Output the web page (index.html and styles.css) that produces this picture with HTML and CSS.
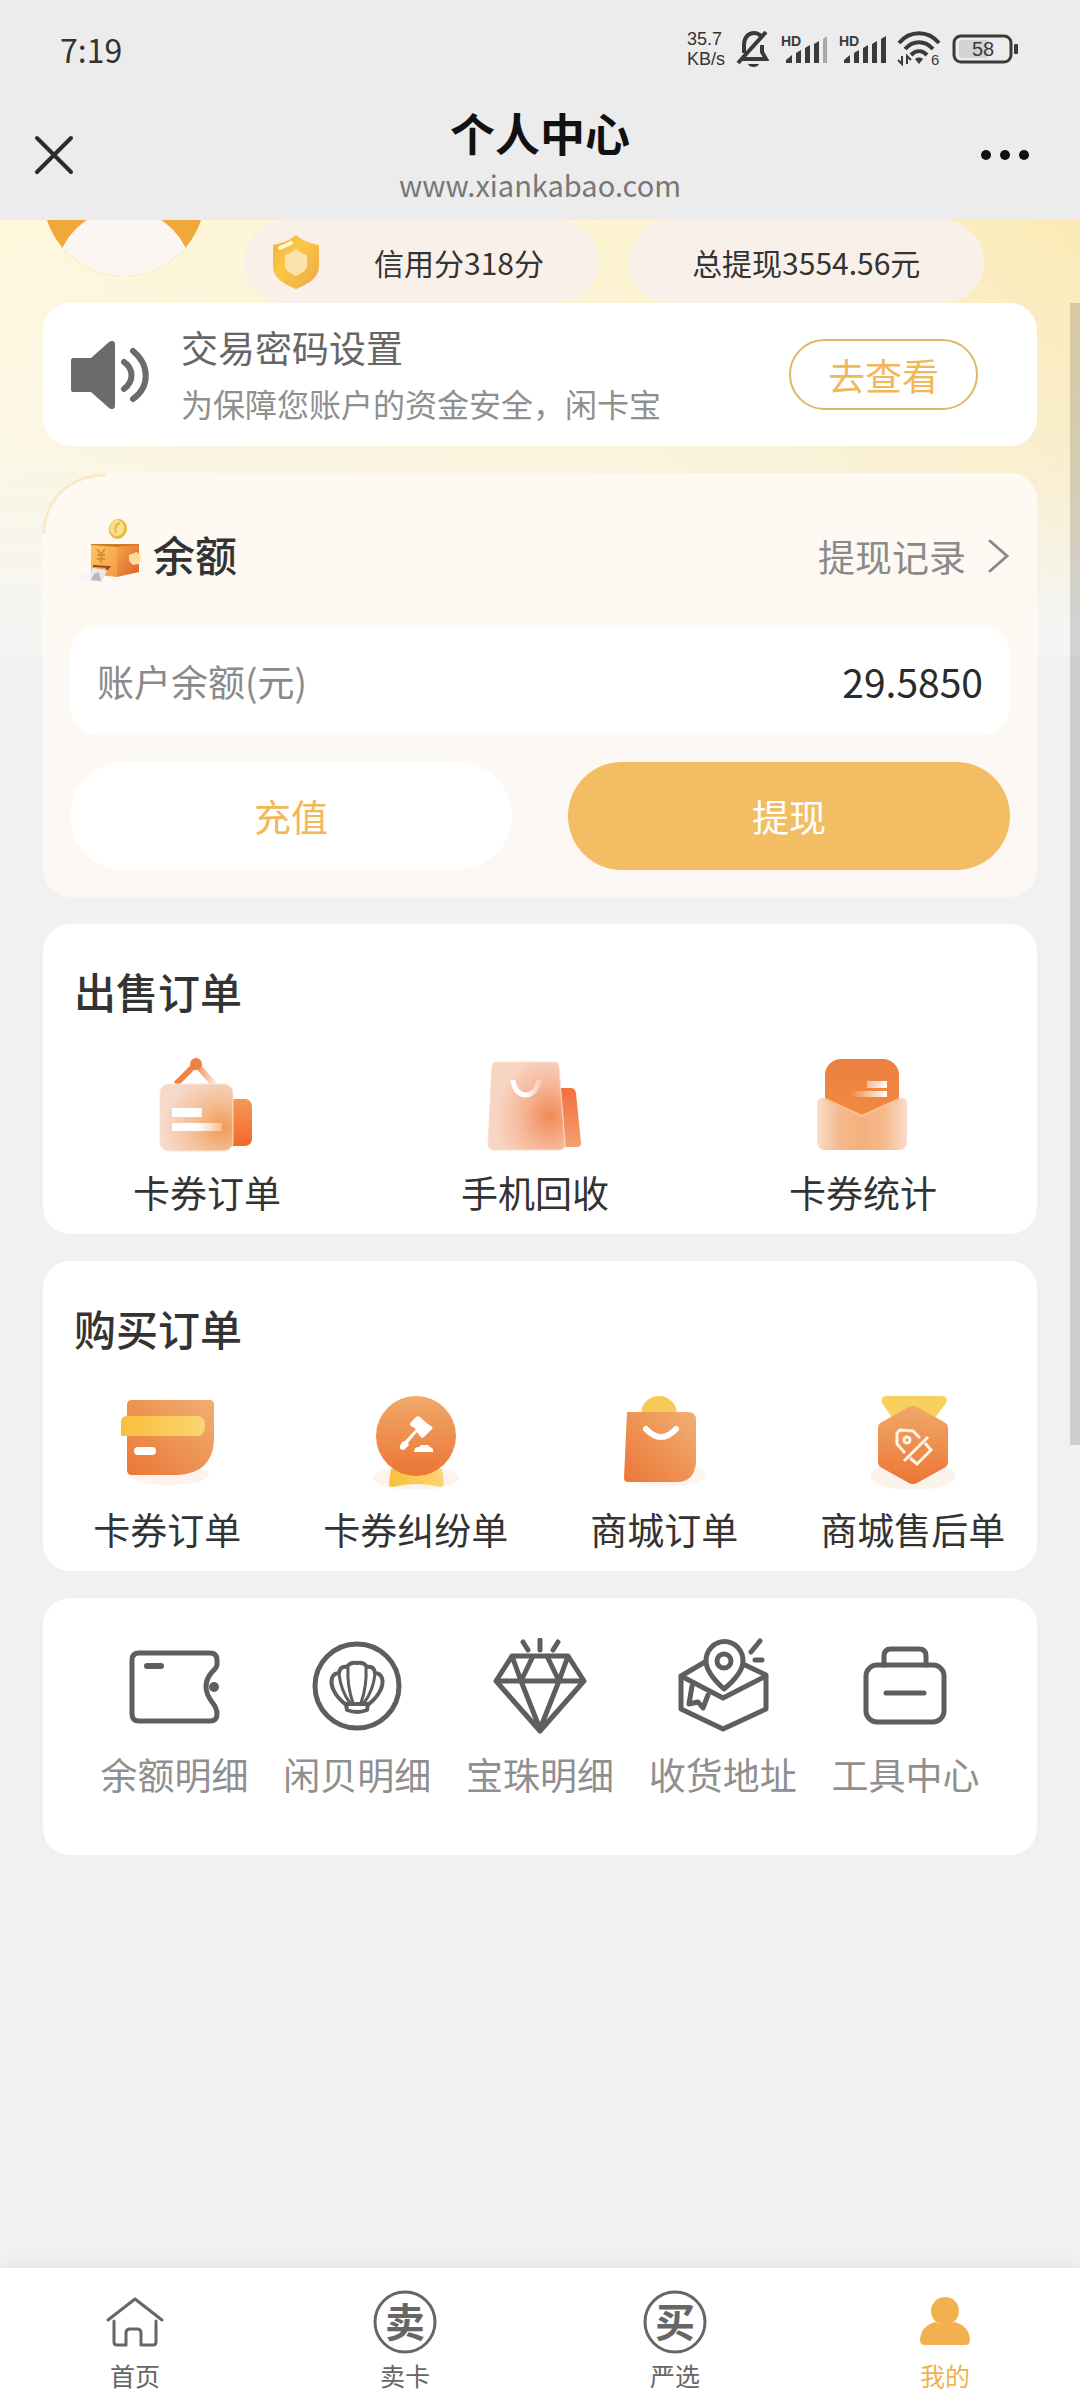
FILE: index.html
```html
<!DOCTYPE html>
<html lang="zh-CN">
<head>
    <meta charset="UTF-8">
    <meta name="viewport" content="width=device-width, initial-scale=1">
    <title>个人中心</title>
    <link rel="stylesheet" href="styles.css">
</head>
<body>
    <header class="topbar">
        <div class="status">
            <span class="clock">7:19</span>
            <div class="status-icons">
                <div class="speed"><div>35.7</div><div>KB/s</div></div>
                <svg width="34" height="38" viewBox="0 0 34 38" fill="none" stroke="#3a3a3a" stroke-width="4">
                    <path d="M5 29h25l-4-7v-7M8 23v-8c0-7 4-12 10-12 3 0 5 1 7 3M30 2L2 33"/>
                    <path d="M12 34h11c-1 4-10 4-11 0z" fill="#3a3a3a" stroke="none"/>
                </svg>
                <svg width="47" height="38" viewBox="0 -3 47 38" fill="#3a3a3a">
                    <text x="0" y="13" class="hd">HD</text>
                    <path d="M5 27l6-5v8H5zM15 20l5-3v13h-5zM24 15l5-3v18h-5zM33 11l5-3v22h-5z"/>
                    <path d="M42 6l4-3v27h-4z" fill="#a8a8a8"/>
                </svg>
                <svg width="47" height="38" viewBox="0 -3 47 38" fill="#3a3a3a">
                    <text x="0" y="13" class="hd">HD</text>
                    <path d="M5 27l6-5v8H5zM15 20l5-3v13h-5zM24 15l5-3v18h-5zM33 11l5-3v22h-5zM42 6l5-3v27h-5z"/>
                </svg>
                <svg width="44" height="40" viewBox="0 -1 44 40" fill="none" stroke="#3a3a3a" stroke-width="4">
                    <path d="M2 13c11-13 29-13 40 0M8 19c8-9 20-9 28 0M14 25c5-5 11-5 16 0"/>
                    <path d="M18 29c2-2 6-2 8 0l-4 5z" fill="#3a3a3a" stroke="none"/>
                    <path d="M5 26v8l-4-4M10 34v-8l4 4" stroke-width="2"/>
                    <text x="34" y="35" class="wifi-no">6</text>
                </svg>
                <svg width="68" height="30" viewBox="0 0 68 30">
                    <rect x="7" y="6" width="30" height="18" rx="3" fill="#d3d3d3"/>
                    <rect x="2" y="2" width="57" height="26" rx="7" fill="none" stroke="#3a3a3a" stroke-width="3"/>
                    <rect x="62" y="10" width="4" height="10" rx="1" fill="#3a3a3a"/>
                    <text x="31" y="22" class="battery-no">58</text>
                </svg>
            </div>
        </div>
        <div class="titlebar">
            <button class="icon-btn" aria-label="关闭">
                <svg width="40" height="40" viewBox="0 0 40 40" stroke="#2b2b2b" stroke-width="4" stroke-linecap="round"><path d="M3 3l34 34M37 3L3 37"/></svg>
            </button>
            <div class="title">
                <h1>个人中心</h1>
                <p>www.xiankabao.com</p>
            </div>
            <button class="icon-btn" aria-label="更多">
                <svg width="52" height="40" viewBox="0 0 52 40" fill="#111"><circle cx="7" cy="20" r="5"/><circle cx="26" cy="20" r="5"/><circle cx="45" cy="20" r="5"/></svg>
            </button>
        </div>
    </header>

    <main class="content">
        <section class="profile">
            <svg width="162" height="58" viewBox="0 105 162 58">
                <clipPath id="face"><circle cx="81" cy="80" r="81"/></clipPath>
                <g clip-path="url(#face)">
                    <rect width="162" height="163" fill="#f1a83b"/>
                    <circle cx="81" cy="162" r="68" fill="#fcf6f3"/>
                </g>
            </svg>
            <div class="pill credit">
                <svg width="48" height="56" viewBox="0 0 48 56">
                    <defs><linearGradient id="shield" x1="0" y1="0" x2="1" y2="1"><stop offset="0" stop-color="#f0ae45"/><stop offset=".4" stop-color="#fbc844"/><stop offset="1" stop-color="#eda64b"/></linearGradient></defs>
                    <path d="M24 1c7 6 14 8 23 10v22c0 10-10 17-23 22C11 50 1 43 1 33V11C10 9 17 7 24 1z" fill="url(#shield)"/>
                    <path d="M24 15c4 3 7 5 11 6v11c0 4-5 7-11 10-6-3-11-6-11-10V21c4-1 7-3 11-6z" fill="#fbe3ae"/>
                    <path d="M8 14l11-5" stroke="#fff6d8" stroke-width="4" stroke-linecap="round"/>
                </svg>
                <span>信用分318分</span>
            </div>
            <div class="pill"><span>总提现3554.56元</span></div>
        </section>

        <section class="card notice">
            <svg width="78" height="68" viewBox="0 0 78 68">
                <path d="M2 17h18L38 1c3-2 6-1 6 2v62c0 3-3 4-6 2L20 51H2c-1 0-2-1-2-2V19c0-1 1-2 2-2z" fill="#6b6b6b"/>
                <path d="M53 21c10 7 10 19 0 27M62 10c17 14 17 36 0 48" fill="none" stroke="#6b6b6b" stroke-width="6" stroke-linecap="round"/>
            </svg>
            <div class="notice-text">
                <h2>交易密码设置</h2>
                <p>为保障您账户的资金安全，闲卡宝</p>
            </div>
            <button class="check-btn">去查看</button>
        </section>

        <section class="card balance">
            <svg class="corner" width="64" height="62" viewBox="0 0 64 62" fill="none"><path d="M1 61C1 28 26 2 63 2" stroke="#fbe8c6" stroke-width="3"/></svg>
            <div class="balance-head">
                <svg width="68" height="66" viewBox="0 0 68 66">
                    <defs>
                        <linearGradient id="boxL" x1="0" y1="0" x2="1" y2="1"><stop offset="0" stop-color="#fbc763"/><stop offset="1" stop-color="#f39a45"/></linearGradient>
                        <linearGradient id="boxR" x1="0" y1="0" x2="1" y2="1"><stop offset="0" stop-color="#f3a64a"/><stop offset="1" stop-color="#dd6025"/></linearGradient>
                    </defs>
                    <ellipse cx="43" cy="12" rx="9" ry="10" fill="#e9bb4b" transform="rotate(18 43 12)"/>
                    <ellipse cx="42" cy="11" rx="7" ry="8" fill="#fae08a" transform="rotate(18 42 11)"/>
                    <path d="M41 16c-2-5 0-9 4-10" stroke="#e3b344" stroke-width="2" fill="none"/>
                    <path d="M16 27h48v3H16z" fill="#cf7a2c"/>
                    <path d="M16 28l26 2v30l-26-3z" fill="url(#boxL)"/>
                    <path d="M42 30l22-2v27l-22 5z" fill="url(#boxR)"/>
                    <path d="M22 32l4 5 4-5M26 37v9M22 38h8M22 42h8" stroke="#dd8d35" stroke-width="2" fill="none"/>
                    <path d="M54 38l8-3 4 5-2 7-6 1-4-4z" fill="#fbdc9c"/>
                    <path d="M18 49l16 1-3 3" stroke="#9c4316" stroke-width="2" fill="none"/>
                    <path d="M17 51l15 2-5 12-12-1z" fill="#eee8ee"/>
                    <path d="M19 57l5-2 2 9-10-1z" fill="#c4b3bd"/>
                    <path d="M0 63l12-8 5 2-2 7z" fill="#f7f4f6"/>
                </svg>
                <h2>余额</h2>
                <a href="#" class="records">提现记录
                    <svg width="22" height="34" viewBox="0 0 22 34" fill="none" stroke="#8a8a8a" stroke-width="3" stroke-linecap="round"><path d="M2 2l17 15L2 32"/></svg>
                </a>
            </div>
            <div class="amount">
                <span>账户余额(元)</span>
                <strong>29.5850</strong>
            </div>
            <div class="actions">
                <button class="recharge">充值</button>
                <button class="withdraw">提现</button>
            </div>
        </section>

        <section class="card orders">
            <h2>出售订单</h2>
            <div class="grid sell">
                <a href="#">
                    <svg width="96" height="96" viewBox="0 0 96 96">
                        <defs>
                            <linearGradient id="s1" x1="0" y1="0" x2="0" y2="1"><stop offset="0" stop-color="#f29a55"/><stop offset="1" stop-color="#f4672a"/></linearGradient>
                            <radialGradient id="s2" cx=".85" cy=".65" r=".8"><stop offset="0" stop-color="#f09c52"/><stop offset=".5" stop-color="#f5bf98"/><stop offset="1" stop-color="#f6d9c9"/></radialGradient>
                            <linearGradient id="s3"><stop offset="0" stop-color="#ee7f3c"/><stop offset=".5" stop-color="#f08b4b"/><stop offset="1" stop-color="#fbe3d3"/></linearGradient>
                            <linearGradient id="fade"><stop offset="0" stop-color="#fff"/><stop offset=".5" stop-color="#fff"/><stop offset="1" stop-color="#fff" stop-opacity=".3"/></linearGradient>
                        </defs>
                        <path d="M17 28L37 8l18 20" fill="none" stroke="url(#s3)" stroke-width="6"/>
                        <circle cx="37" cy="8" r="6" fill="#ef8141"/>
                        <rect x="66" y="43" width="27" height="47" rx="7" fill="url(#s1)"/>
                        <rect x="1" y="28" width="73" height="67" rx="9" fill="url(#s2)" stroke="#fbe2d2"/>
                        <path d="M13 52h30v9H13zM13 67h50v8H13z" fill="url(#fade)"/>
                    </svg>
                    <span>卡券订单</span>
                </a>
                <a href="#">
                    <svg width="96" height="96" viewBox="0 0 96 96">
                        <defs><radialGradient id="s4" cx=".8" cy=".62" r=".7"><stop offset="0" stop-color="#f18a58"/><stop offset=".5" stop-color="#f5b595"/><stop offset="1" stop-color="#f8d5c3"/></radialGradient>
                        <linearGradient id="s5" x1="0" y1="0" x2="0" y2="1"><stop offset="0" stop-color="#f2703b"/><stop offset="1" stop-color="#f3a071"/></linearGradient></defs>
                        <path d="M70 32h14q4 0 5 5l5 50q0 4-4 4H70z" fill="url(#s5)"/>
                        <path d="M10 6h57q5 0 5 5l6 77q0 6-6 6H8q-7 0-7-6L5 11q0-5 5-5z" fill="url(#s4)" stroke="#fbded0"/>
                        <path d="M26 24c2 20 23 20 26 0" fill="none" stroke="url(#fade)" stroke-width="5"/>
                    </svg>
                    <span>手机回收</span>
                </a>
                <a href="#">
                    <svg width="96" height="96" viewBox="0 0 96 96">
                        <defs><linearGradient id="s6" x1="0" y1="0" x2="0" y2="1"><stop offset="0" stop-color="#ec7f3f"/><stop offset="1" stop-color="#f28d43"/></linearGradient>
                        <linearGradient id="s7"><stop offset="0" stop-color="#f9dccb"/><stop offset=".25" stop-color="#f5b98d"/><stop offset=".5" stop-color="#f4b07c"/><stop offset=".75" stop-color="#f5b98d"/><stop offset="1" stop-color="#f9dccb"/></linearGradient>
                        <linearGradient id="fade2"><stop offset="0" stop-color="#fff" stop-opacity="0"/><stop offset="1" stop-color="#fff"/></linearGradient></defs>
                        <rect x="10" y="3" width="74" height="70" rx="16" fill="url(#s6)"/>
                        <path d="M52 25h20v7H52zM35 35h37v6H35z" fill="url(#fade2)"/>
                        <path d="M7 42q3 0 5 1l35 17 35-17q3-1 5-1 5 0 5 6v37q0 9-9 9H11q-9 0-9-9V48q0-6 5-6z" fill="url(#s7)"/>
                        <path d="M10 43l37 17 37-17" fill="none" stroke="#fbc193" stroke-width="2"/>
                    </svg>
                    <span>卡券统计</span>
                </a>
            </div>
        </section>

        <section class="card orders">
            <h2>购买订单</h2>
            <div class="grid buy">
                <a href="#">
                    <svg width="96" height="96" viewBox="0 0 96 96">
                        <defs><linearGradient id="b1" x1="0" y1="1" x2="1" y2="0"><stop offset="0" stop-color="#eb7637"/><stop offset="1" stop-color="#f0b071"/></linearGradient>
                        <linearGradient id="b2"><stop offset="0" stop-color="#f8bf3c"/><stop offset="1" stop-color="#fad673"/></linearGradient>
                        <linearGradient id="b3" x1="0" y1="0" x2="0" y2="1"><stop offset="0" stop-color="#f0a968"/><stop offset="1" stop-color="#ec7536"/></linearGradient></defs>
                        <ellipse cx="50" cy="82" rx="40" ry="10" fill="#fdf3ed"/>
                        <path d="M13 7h78q4 0 4 5v36q-2 32-36 34H13q-5 0-5-5V12q0-5 5-5z" fill="url(#b1)"/>
                        <path d="M8 23h70q8 0 8 10t-8 10H2V29q0-6 6-6z" fill="url(#b2)"/>
                        <rect x="15" y="54" width="22" height="8" rx="4" fill="#fff"/>
                    </svg>
                    <span>卡券订单</span>
                </a>
                <a href="#">
                    <svg width="96" height="96" viewBox="0 0 96 96">
                        <ellipse cx="48" cy="85" rx="43" ry="12" fill="#fdf3ed"/>
                        <path d="M23 76h51l2 15q-1 3-3 3-25-6-49 0-3 0-3-3z" fill="url(#b2)"/>
                        <circle cx="48" cy="43" r="40" fill="url(#b3)"/>
                        <g fill="#fff">
                            <path d="M48 24q3-2 5 1 5 5 10 8 3 2 0 4l-7 7q-2 2-4-1l-3-4-9 11q2 2-1 4l-3 3q-5 0-4-4l2-4q3-1 4-2l10-11-5-3q-2-2 0-4z"/>
                            <path d="M46 59q0-5 5-5l2-2h7l2 2q4 1 3 5z"/>
                        </g>
                    </svg>
                    <span>卡券纠纷单</span>
                </a>
                <a href="#">
                    <svg width="96" height="96" viewBox="0 0 96 96">
                        <ellipse cx="50" cy="82" rx="40" ry="12" fill="#fdf5f0"/>
                        <circle cx="43" cy="21" r="18" fill="#f5cb55"/>
                        <path d="M11 19h61q8 0 8 8v43q-2 19-19 19H12q-4 0-4-4z" fill="url(#b1)"/>
                        <path d="M30 36q15 16 30 0" fill="none" stroke="#fff" stroke-width="6" stroke-linecap="round"/>
                    </svg>
                    <span>商城订单</span>
                </a>
                <a href="#">
                    <svg width="96" height="96" viewBox="0 0 96 96">
                        <ellipse cx="48" cy="83" rx="43" ry="14" fill="#fdf3ed"/>
                        <path d="M22 3h54q8 0 5 7L69 26H28L17 10q-2-7 5-7z" fill="#f7d05e"/>
                        <path d="M44 14q4-2 8 0l27 15q4 2 4 6v34q0 4-4 6L52 90q-4 2-8 0L17 75q-4-2-4-6V35q0-4 4-6z" fill="url(#b3)"/>
                        <g fill="none" stroke="#fff3e4" stroke-width="3">
                            <path d="M40 60l-8-9V40l3-3 13 1 7 7M60 50l6 7-14 14-7-6M39 68l24-24"/>
                            <circle cx="42" cy="47" r="3"/>
                        </g>
                    </svg>
                    <span>商城售后单</span>
                </a>
            </div>
        </section>

        <section class="card tools">
            <a href="#">
                <svg width="96" height="96" viewBox="0 0 96 96" class="line">
                    <path d="M13 15h71q7 0 7 7v5q-1 4-5 7-12 14 0 30 5 6 5 12 0 7-7 7H13q-7 0-7-7V22q0-7 7-7z"/>
                    <path d="M21 28h14" stroke-width="6"/>
                    <circle cx="88" cy="49" r="5" fill="#5e5e5e" stroke="none"/>
                </svg>
                <span>余额明细</span>
            </a>
            <a href="#">
                <svg width="96" height="96" viewBox="0 0 96 96" class="line">
                    <circle cx="48" cy="48" r="42"/>
                    <path d="M36 66C25 57 21 47 23 40q2-5 7-5 1-7 8-6 3-5 10-4 7-1 10 4 7-1 8 6 5 0 7 5c2 7-2 17-13 26z" stroke-width="4"/>
                    <path d="M30 36q2 17 11 29M39 30q-1 18 5 35M57 30q1 18-5 35M66 36q-2 17-11 29" stroke-width="3"/>
                    <path d="M37 66h22l-1 6q-10 4-20 0z" stroke-width="4"/>
                </svg>
                <span>闲贝明细</span>
            </a>
            <a href="#">
                <svg width="96" height="96" viewBox="0 0 96 96" class="line">
                    <path d="M20 18h56l16 25-44 50L4 43zM4 43h88M20 18l9 25 12-25M55 18l12 25 9-25M29 43l19 48 19-48"/>
                    <path d="M31 4l5 8M48 2v10M66 4l-5 8"/>
                </svg>
                <span>宝珠明细</span>
            </a>
            <a href="#">
                <svg width="96" height="96" viewBox="0 0 96 96" class="line">
                    <path d="M30 24L6 38v33l42 20 43-20V37L70 27M6 38l42 22 43-22"/>
                    <path d="M49 51C38 41 31 32 31 23a18 19 0 0 1 37 0c0 9-7 18-19 28z" fill="#fff"/>
                    <circle cx="49" cy="23" r="7"/>
                    <path d="M76 14l9-11M80 22h7" />
                    <path d="M17 48l-3 18 9-2 5 6 5-13"/>
                </svg>
                <span>收货地址</span>
            </a>
            <a href="#">
                <svg width="96" height="96" viewBox="0 0 96 96" class="line">
                    <rect x="8" y="27" width="78" height="57" rx="11"/>
                    <path d="M26 27V18q0-7 7-7h28q7 0 7 7v9M28 55h38"/>
                </svg>
                <span>工具中心</span>
            </a>
        </section>
    </main>

    <nav class="tabbar">
        <a href="#">
            <svg width="64" height="64" viewBox="0 0 64 64" fill="none" stroke="#666" stroke-width="3" stroke-linecap="round" stroke-linejoin="round"><path d="M5 30L32 9l27 21M11 31v21q0 3 3 3h9V43q0-4 4-4h7q4 0 4 4v12h12q3 0 3-3V31"/></svg>
            <span>首页</span>
        </a>
        <a href="#">
            <svg width="64" height="64" viewBox="0 0 64 64"><circle cx="32" cy="32" r="30" fill="none" stroke="#666" stroke-width="3"/><text x="32" y="47" class="badge-char">卖</text></svg>
            <span>卖卡</span>
        </a>
        <a href="#">
            <svg width="64" height="64" viewBox="0 0 64 64"><circle cx="32" cy="32" r="30" fill="none" stroke="#666" stroke-width="3"/><text x="32" y="47" class="badge-char">买</text></svg>
            <span>严选</span>
        </a>
        <a href="#" class="active">
            <svg width="64" height="64" viewBox="0 0 64 64" fill="#f2b14e"><ellipse cx="32" cy="21" rx="14" ry="14"/><path d="M22 32q10 5 20 0 14 4 15 18 0 5-5 5H12q-5 0-5-5 1-14 15-18z"/></svg>
            <span>我的</span>
        </a>
    </nav>
    <div class="scrollbar"></div>
</body>
</html>
```

FILE: styles.css
```css
* {
    box-sizing: border-box;
}

body {
    margin: 0;
    min-height: 100vh;
    display: flex;
    flex-direction: column;
    background: #f1f1f1;
    font-family: "Noto Sans CJK SC", "Noto Sans", sans-serif;
    color: #333;
}

h1, h2, p {
    margin: 0;
    font-weight: normal;
}

a {
    color: inherit;
    text-decoration: none;
}

button {
    border: 0;
    padding: 0;
    background: none;
    font: inherit;
}

svg {
    display: block;
    flex: none;
}

/* top bar */
.topbar {
    background: #ececec;
    height: 220px;
}

.status {
    display: flex;
    justify-content: space-between;
    align-items: center;
    height: 98px;
    padding: 0 60px;
}

.clock {
    font-size: 32px;
}

.status-icons {
    display: flex;
    align-items: center;
    gap: 11px;
    font-family: "Liberation Sans", Arial, sans-serif;
}

.speed {
    font-size: 18px;
    line-height: 20px;
}

.hd {
    font-size: 14px;
    font-weight: bold;
}

.wifi-no {
    font-size: 15px;
    fill: #3a3a3a;
    stroke: none;
}

.battery-no {
    font-size: 20px;
    text-anchor: middle;
    fill: #3a3a3a;
}

.titlebar {
    display: flex;
    justify-content: space-between;
    align-items: center;
    height: 114px;
    padding: 0 34px;
}

.icon-btn {
    width: 67px;
}

.title {
    text-align: center;
}

.title h1 {
    font-size: 45px;
    font-weight: bold;
    line-height: 58px;
    color: #111;
}

.title p {
    font-size: 29px;
    line-height: 44px;
    color: #777;
}

/* page content */
.content {
    padding: 0 43px 28px;
    background:
        linear-gradient(to bottom, rgba(246, 246, 244, 0), rgba(246, 246, 244, 0.4) 55%, #f5f5f3 92%) 0 0 / 100% 436px no-repeat,
        linear-gradient(100deg, #fef7dc 0, #fdf3cf 60%, #fbe8b0 100%) 0 0 / 100% 436px no-repeat;
}

.card {
    background: #fff;
    border-radius: 27px;
    margin-bottom: 27px;
}

.profile {
    display: grid;
    grid-template-columns: 170px 1fr 1fr;
    gap: 30px;
    height: 83px;
    padding-right: 53px;
}

.pill {
    display: flex;
    align-items: center;
    justify-content: center;
    border-radius: 42px;
    background: #f9f1e9;
    font-size: 30px;
}

.credit {
    justify-content: flex-start;
    gap: 54px;
    padding-left: 29px;
}

.notice {
    display: flex;
    align-items: center;
    height: 143px;
    padding: 0 59px 0 28px;
}

.notice-text {
    flex: 1;
    padding-left: 32px;
    line-height: 56px;
}

.notice h2 {
    font-size: 37px;
    color: #666;
}

.notice p {
    font-size: 32px;
    color: #8f8f8f;
}

.check-btn {
    width: 189px;
    height: 71px;
    border: 2px solid #e0b862;
    border-radius: 36px;
    font-size: 37px;
    line-height: 60px;
    color: #f2b758;
}

/* balance */
.balance {
    position: relative;
    padding: 0 27px 27px;
    border-top-left-radius: 62px;
    background: linear-gradient(#fefaf2, #fcf7f4);
}

.corner {
    position: absolute;
    left: 0;
    top: 0;
}

.balance-head {
    display: flex;
    align-items: center;
    height: 154px;
    padding: 0 0 0 5px;
}

.balance-head h2 {
    flex: 1;
    padding: 6px 0 0 10px;
    font-size: 42px;
    font-weight: 500;
}

.records {
    display: flex;
    align-items: center;
    gap: 22px;
    padding-top: 12px;
    font-size: 37px;
    color: #8a8a8a;
}

.amount {
    display: flex;
    justify-content: space-between;
    align-items: center;
    height: 108px;
    padding: 0 27px;
    border-radius: 27px;
    background: #fff;
    font-size: 37px;
    color: #8a8a8a;
}

.amount strong {
    font-size: 39px;
    font-weight: normal;
    color: #2b2b2b;
}

.actions {
    display: flex;
    gap: 56px;
    margin-top: 27px;
}

.actions button {
    flex: 1;
    height: 108px;
    border-radius: 54px;
    font-size: 37px;
}

.recharge {
    background: #fff;
    color: #f2b758;
}

.withdraw {
    background: #f3bd64;
    color: #fff;
}

/* orders */
.orders {
    padding: 42px 0 16px;
}

.orders h2 {
    padding-left: 31px;
    font-size: 42px;
    font-weight: 500;
    line-height: 50px;
}

.grid {
    display: grid;
    margin-top: 40px;
}

.sell {
    grid-template-columns: repeat(3, 1fr);
    padding-right: 10px;
}

.buy {
    grid-template-columns: repeat(4, 1fr);
}

.grid a, .tools a {
    display: flex;
    flex-direction: column;
    align-items: center;
    gap: 16px;
    font-size: 37px;
    line-height: 48px;
    white-space: nowrap;
}

.grid a {
    padding-bottom: 2px;
}

/* tools */
.tools {
    display: grid;
    grid-template-columns: repeat(5, 1fr);
    padding: 40px 40px 57px;
    margin-bottom: 0;
    color: #8f8f8f;
}

.line {
    fill: none;
    stroke: #5e5e5e;
    stroke-width: 5;
    stroke-linecap: round;
    stroke-linejoin: round;
}

/* bottom tabs */
.tabbar {
    display: grid;
    grid-template-columns: repeat(4, 1fr);
    margin-top: auto;
    padding: 22px 0 10px;
    background: #fff;
    box-shadow: 0 0 20px rgba(0, 0, 0, 0.08);
}

.tabbar a {
    display: flex;
    flex-direction: column;
    align-items: center;
    gap: 6px;
    font-size: 25px;
    line-height: 30px;
    color: #666;
}

.tabbar .active {
    color: #f2b14e;
}

.badge-char {
    font-size: 40px;
    font-weight: bold;
    text-anchor: middle;
    fill: #666;
}

.scrollbar {
    position: absolute;
    right: 0;
    top: 303px;
    width: 10px;
    height: 1142px;
    background: rgba(0, 0, 0, 0.14);
}
```
